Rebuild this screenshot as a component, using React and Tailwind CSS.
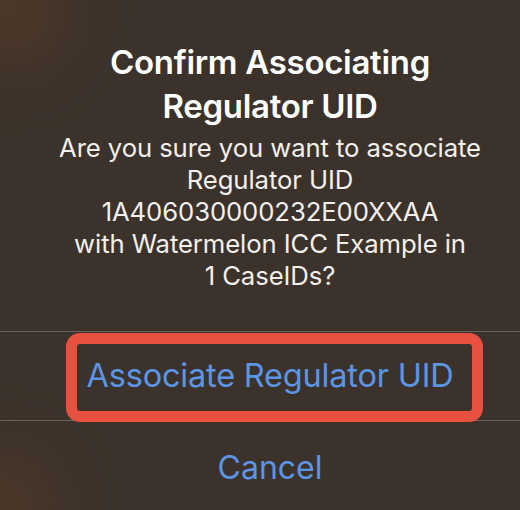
import React from "react";

const AlertDialog = () => {
  return (
    <div
      className="relative w-[520px] h-[510px] overflow-hidden bg-[#3b322b] flex flex-col text-center"
      style={{ fontFamily: "Inter, 'Noto Sans', sans-serif" }}
    >
      {/* warm glow leaking in at the left corners */}
      <div className="absolute -left-10 -top-10 w-24 h-24 rounded-full bg-[#8a4a20] opacity-40 blur-2xl" />
      <div className="absolute -left-10 -bottom-12 w-20 h-24 rounded-full bg-[#8a4a20] opacity-40 blur-2xl" />

      <div className="relative pt-[40px] pl-[20px]">
        <h2 className="text-[33px] leading-[44px] font-semibold text-white tracking-[-0.3px]">
          Confirm Associating
          <br />
          Regulator UID
        </h2>
        <p className="mt-[4px] text-[25.7px] leading-[32px] text-[#f2efec] tracking-[-0.1px]">
          Are you sure you want to associate
          <br />
          Regulator UID
          <br />
          1A406030000232E00XXAA
          <br />
          with Watermelon ICC Example in
          <br />
          1 CaseIDs?
        </p>
      </div>

      <div className="relative mt-auto">
        <div className="h-px bg-[#6b625a]" />
        <button className="relative w-full h-[88px] pl-[20px] flex items-center justify-center text-[32.5px] text-[#5c95e6] tracking-[-0.2px]">
          Associate Regulator UID
          <span className="absolute left-[66px] right-[37px] top-[1px] h-[89px] border-[11px] border-[#e8503f] rounded-[14px]" />
        </button>
        <div className="h-px bg-[#6b625a]" />
        <button className="w-full h-[89px] pl-[20px] pt-[4px] flex items-center justify-center text-[32px] text-[#5c95e6]">
          Cancel
        </button>
      </div>
    </div>
  );
};

export default function App() {
  return <AlertDialog />;
}
